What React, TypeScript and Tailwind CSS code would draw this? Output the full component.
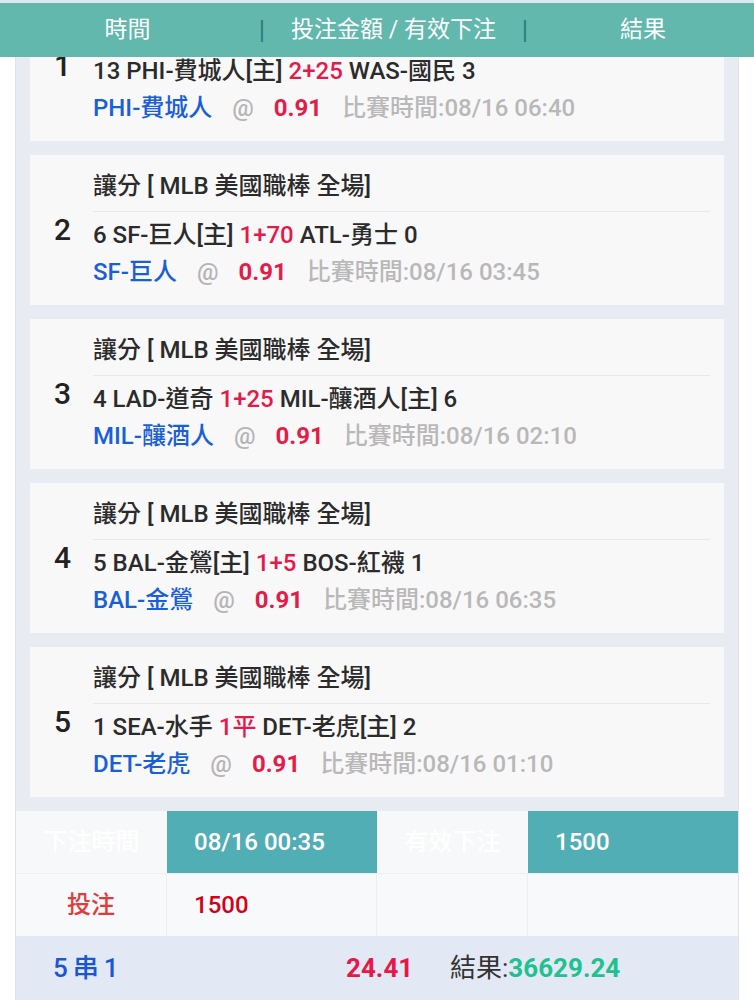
const FONT = "font-['Roboto','Noto_Sans_CJK_TC',sans-serif]";

type Bet = {
  no: number;
  home: string;
  line: string;
  away: string;
  pick: string;
  time: string;
};

const bets: Bet[] = [
  { no: 1, home: "13 PHI-費城人[主]", line: "2+25", away: "WAS-國民 3", pick: "PHI-費城人", time: "08/16 06:40" },
  { no: 2, home: "6 SF-巨人[主]", line: "1+70", away: "ATL-勇士 0", pick: "SF-巨人", time: "08/16 03:45" },
  { no: 3, home: "4 LAD-道奇", line: "1+25", away: "MIL-釀酒人[主] 6", pick: "MIL-釀酒人", time: "08/16 02:10" },
  { no: 4, home: "5 BAL-金鶯[主]", line: "1+5", away: "BOS-紅襪 1", pick: "BAL-金鶯", time: "08/16 06:35" },
  { no: 5, home: "1 SEA-水手", line: "1平", away: "DET-老虎[主] 2", pick: "DET-老虎", time: "08/16 01:10" },
];

function BetCard({ bet }: { bet: Bet }) {
  return (
    <div className="flex h-[150px] bg-[#f8f8f9] pt-[18px]">
      <div className="w-[63px] shrink-0 pt-[42px] pr-[22px] text-right text-[30px] leading-[30px] font-medium text-[#222]">
        {bet.no}
      </div>
      <div className="flex-1 pr-[14px]">
        <div className="h-[26px] text-[24px] leading-[26px] font-medium text-[#2b2b2b] whitespace-nowrap">
          讓分 [ MLB 美國職棒 全場]
        </div>
        <div className="mt-[12px] border-t border-[#e6e8ec]" />
        <div className="mt-[8px] text-[24px] leading-[30px] font-medium text-[#2b2b2b] whitespace-nowrap">
          {bet.home} <span className="text-[#e5194a]">{bet.line}</span> {bet.away}
        </div>
        <div className="mt-[7px] flex items-center gap-[20px] text-[24px] leading-[30px] font-medium whitespace-nowrap">
          <span className="text-[#1b5fd6]">{bet.pick}</span>
          <span className="text-[#b5b5b5]">@</span>
          <span className="text-[#e11d48] font-bold">0.91</span>
          <span className="text-[#b8b8b8]">比賽時間:{bet.time}</span>
        </div>
      </div>
    </div>
  );
}

export default function App() {
  return (
    <div className={`relative h-[1000px] w-full overflow-hidden bg-white ${FONT}`}>
      <div className="mx-[15px] border-x border-[#dfe4ea] bg-[#e8ecf2]">
        <div className="-mt-[9px] flex flex-col gap-[14px] px-[14px]">
          {bets.map((b) => (
            <BetCard key={b.no} bet={b} />
          ))}
        </div>

        <div className="mt-[14px] grid grid-cols-[151px_210px_151px_1fr] text-[24px] font-medium">
          <div className="flex h-[62px] items-center justify-center bg-[#f7f8fa] text-white">下注時間</div>
          <div className="flex h-[62px] items-center bg-[#52aeb5] pl-[27px] text-white">08/16 00:35</div>
          <div className="flex h-[62px] items-center justify-center bg-[#f7f8fa] text-white">有效下注</div>
          <div className="flex h-[62px] items-center bg-[#52aeb5] pl-[27px] text-white">1500</div>

          <div className="flex h-[63px] items-center justify-center border-t border-r border-[#eceef1] bg-[#f8f9fa] text-[#e03c3c]">投注</div>
          <div className="flex h-[63px] items-center border-t border-r border-[#eceef1] bg-[#f8f9fa] pl-[27px] text-[#d0021b]">1500</div>
          <div className="h-[63px] border-t border-r border-[#eceef1] bg-[#f8f9fa]" />
          <div className="h-[63px] border-t border-[#eceef1] bg-[#f8f9fa]" />
        </div>

        <div className="flex h-[64px] items-center bg-[#e3e9f4] text-[26px] font-medium whitespace-nowrap">
          <span className="ml-[37px] w-[293px] tracking-[5px] text-[#1a56d6]">5串1</span>
          <span className="w-[104px] font-bold text-[#e8174a]">24.41</span>
          <span className="font-normal text-[#333]">
            結果:<span className="font-bold text-[#21c18f]">36629.24</span>
          </span>
        </div>
      </div>

      <div className="absolute left-0 right-0 top-0 border-t-[3px] border-[#dde9ee] bg-[#62b8ad]">
        <div className="flex h-[54px] items-center text-[23px] text-white">
          <span className="w-[255px] text-center">時間</span>
          <span className="w-[14px] text-center text-[26px] text-[#2b7f7a]">|</span>
          <span className="w-[249px] text-center">投注金額 / 有效下注</span>
          <span className="w-[14px] text-center text-[26px] text-[#2b7f7a]">|</span>
          <span className="flex-1 text-center">結果</span>
        </div>
      </div>
    </div>
  );
}
